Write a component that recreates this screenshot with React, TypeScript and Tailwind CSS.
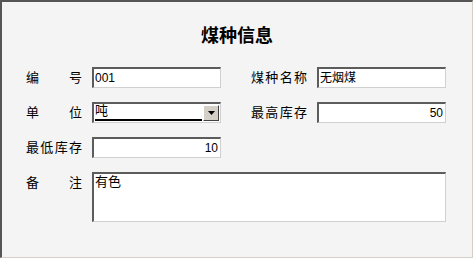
import React from "react";

const FONT = "font-['Liberation_Sans','Noto_Sans_CJK_SC',sans-serif]";

function Sunken({
  className,
  children,
}: {
  className?: string;
  children?: React.ReactNode;
}) {
  return (
    <div
      className={`bg-white border-t-2 border-l-2 border-t-[#5c5c5c] border-l-[#5c5c5c] border-b border-r border-b-[#d0d0d0] border-r-[#d0d0d0] ${className ?? ""}`}
    >
      {children}
    </div>
  );
}

function Label({ text }: { text: string }) {
  return (
    <div className="w-[56px] flex justify-between text-[13px] leading-[21px] text-black">
      {text.split("").map((c, i) => (
        <span key={i}>{c}</span>
      ))}
    </div>
  );
}

function TextField({ value, right }: { value: string; right?: boolean }) {
  return (
    <Sunken className="w-[129px] h-[21px] flex items-center">
      <span
        className={`w-full text-[12px] leading-none ${right ? "text-right pr-[2px]" : "pl-[1px]"}`}
      >
        {value}
      </span>
    </Sunken>
  );
}

function Field({
  label,
  children,
}: {
  label: string;
  children: React.ReactNode;
}) {
  return (
    <div className="flex items-start gap-[10px]">
      <Label text={label} />
      {children}
    </div>
  );
}

export default function App() {
  return (
    <div className={`w-[475px] h-[260px] bg-white ${FONT}`}>
      <div className="w-[473px] h-[258px] bg-[#f4f4f4] border-t-2 border-l-2 border-t-[#555] border-l-[#555] border-r border-b border-r-[#d4d0c8] border-b-[#d4d0c8] pt-[24px] pl-[24px]">
        <h1 className="w-[422px] text-center text-[18px] leading-[20px] font-bold text-black">
          煤种信息
        </h1>

        <div className="mt-[21px] flex flex-col gap-[14px]">
          <div className="flex gap-[30px]">
            <Field label="编号">
              <TextField value="001" />
            </Field>
            <Field label="煤种名称">
              <TextField value="无烟煤" />
            </Field>
          </div>

          <div className="flex gap-[30px]">
            <Field label="单位">
              <Sunken className="w-[129px] h-[21px] flex items-stretch">
                <div className="flex-1 flex flex-col pl-[1px] pr-[1px]">
                  <span className="block text-[13px] leading-[14px]">吨</span>
                  <div className="mt-auto mb-[1px] h-[2px] bg-black" />
                </div>
                <div className="w-[16px] my-[1px] mr-[1px] bg-[#d4d0c8] border border-t-white border-l-white border-b-[#404040] border-r-[#404040] flex items-center justify-center">
                  <svg width="7" height="4" viewBox="0 0 7 4">
                    <path d="M0 0h7L3.5 4z" fill="#000" />
                  </svg>
                </div>
              </Sunken>
            </Field>
            <Field label="最高库存">
              <TextField value="50" right />
            </Field>
          </div>

          <div className="flex gap-[30px]">
            <Field label="最低库存">
              <TextField value="10" right />
            </Field>
          </div>

          <Field label="备注">
            <Sunken className="w-[354px] h-[50px] pl-[1px]">
              <span className="block text-[13px] leading-[15px]">有色</span>
            </Sunken>
          </Field>
        </div>
      </div>
    </div>
  );
}
